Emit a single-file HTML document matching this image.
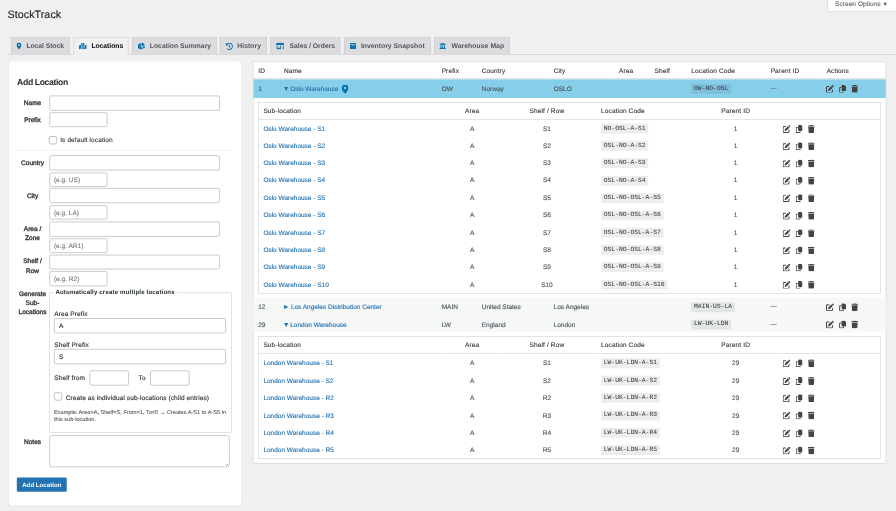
<!DOCTYPE html>
<html lang="en"><head><meta charset="utf-8"><title>StockTrack</title>
<style>
html,body{margin:0;padding:0;background:#f0f0f1;overflow:hidden;width:896px;height:511px}
#s{position:absolute;left:0;top:0;width:1920px;height:1095px;transform:scale(0.4666667);transform-origin:0 0;font-family:"Liberation Sans",sans-serif;font-size:14px;color:#3c434a;text-rendering:geometricPrecision;will-change:opacity;-webkit-text-stroke:.3px}
#s *{box-sizing:border-box}
.so{position:absolute;left:1772.5px;top:-5px;width:160px;height:29.5px;border:1px solid #c3c4c7;border-radius:0 0 4px 4px;background:rgba(255,255,255,.996);color:#646970;font-size:14px;line-height:24px;padding-left:16px;letter-spacing:.08px;white-space:nowrap}
.sotri{font-size:11.5px;margin-left:0;position:relative;top:0;letter-spacing:0}
.h1{position:absolute;left:16px;top:15px;font-size:23px;line-height:30px;color:#1d2327;letter-spacing:.1px;white-space:nowrap;-webkit-text-stroke:.3px}
.tabline{position:absolute;top:115.5px;height:1px;background:#c3c4c7}
.tab{position:absolute;top:79.5px;height:36px;border:1px solid #c3c4c7;border-bottom:none;background:rgba(220,220,222,.996);color:#50575e;font-weight:bold;font-size:14.5px;line-height:24px;padding:5px 0 0 10.5px;white-space:nowrap;-webkit-text-stroke:0}
.tab.act{background:rgba(240,240,241,.996);color:#000;height:37px}
.tab span{position:absolute;top:6px}
.tic{fill:#0a74ad;position:absolute;left:10.5px;top:10.5px}
.card{position:absolute;left:19px;top:132px;width:498px;height:952px;background:rgba(255,255,255,.996);border-radius:8px;box-shadow:0 1px 3px rgba(0,0,0,.05)}
.h2{position:absolute;font-size:18.5px;font-weight:bold;color:#1d2327;line-height:24px;white-space:nowrap;letter-spacing:-.8px;-webkit-text-stroke:0}
.lab{position:absolute;left:29.7px;width:80px;text-align:center;font-size:14px;font-weight:normal;color:#2c3338;white-space:nowrap;letter-spacing:0;-webkit-text-stroke:.7px}
.inp{position:absolute;border:1px solid #8c8f94;border-radius:4px;background:rgba(255,255,255,.996);font-size:14px;line-height:28px;padding-left:9px;white-space:nowrap;letter-spacing:0}
.inp.ta:after{content:"";position:absolute;right:2px;bottom:2px;width:8px;height:8px;background:linear-gradient(135deg,transparent 50%,#888 50%,#888 58%,transparent 58%,transparent 72%,#888 72%,#888 80%,transparent 80%)}
.it{position:absolute;font-size:14px;line-height:28px;white-space:nowrap;letter-spacing:0}
.ph{color:#7a7d82}
.val{color:#2c3338}
.cb{position:absolute;width:17px;height:17px;border:1px solid #777b80;border-radius:4px;background:rgba(255,255,255,.996)}
.t13{position:absolute;margin-top:0;font-size:14px;line-height:19px;white-space:nowrap;color:#3c434a;letter-spacing:.2px}
.t13.dk{color:#2c3338}
.hr{position:absolute;height:1px;background:#dcdcde}
.fs{position:absolute;border:1px solid #c3c4c7}
.legbg{position:absolute;background:rgba(255,255,255,.996)}
.legend{position:absolute;font-size:13px;font-weight:bold;line-height:20px;color:#1d2327;white-space:nowrap;letter-spacing:.37px;-webkit-text-stroke:0}
.ex{position:absolute;font-size:12px;line-height:15.3px;color:#646970;white-space:nowrap;letter-spacing:0}
.btn{position:absolute;background:rgba(34,113,177,.996);border-radius:3px;color:#fff;font-size:13px;font-weight:bold;line-height:31px;text-align:center;white-space:nowrap;letter-spacing:.1px;-webkit-text-stroke:0}
table{border-collapse:separate;border-spacing:0;table-layout:fixed}
.tbg{position:absolute;left:542.4px;top:131.6px;width:1357px;height:861px;background:rgba(255,255,255,.996);border:1px solid #c3c4c7;box-shadow:0 1px 1px rgba(0,0,0,.04)}
.band{position:absolute;left:543.4px;width:1355px}
.main{position:absolute;left:542.4px;top:131.6px;width:1357px;border:1px solid transparent}
th{font-weight:normal;text-align:left;font-size:14px;color:#2c3338;padding:0 10px;height:36.9px;border-bottom:1px solid #c3c4c7;white-space:nowrap;letter-spacing:.25px;line-height:20px;-webkit-text-stroke:.2px}
td{font-size:14px;color:#50575e;padding:0 10px;white-space:nowrap;letter-spacing:-.05px;line-height:20px;vertical-align:middle}
.main>tbody>tr>td{height:37.15px}
.main>tbody>tr.blue>td{height:40px}
.main>tbody>tr.blue>td.tx{padding-top:4.6px}
.main>tbody>tr.alt>td{padding-top:2.4px}
.main>tbody>tr.subrow>td{padding:10px;height:auto}
a{color:#2271b1;text-decoration:none;-webkit-text-stroke:.25px}
.tri.r{width:13.6px}
.tri{font-size:15px;letter-spacing:0;display:inline-block;width:12.2px;margin-left:-2.5px;-webkit-text-stroke:0;line-height:16px;vertical-align:baseline}
.pinic{fill:#0a74ad;vertical-align:middle;margin-left:7.5px;position:relative;top:-1.5px}
code{font-family:"Liberation Mono",monospace;font-size:13.6px;background:rgba(0,0,0,.07);padding:2.5px 5.85px;letter-spacing:0;color:#3c434a;display:inline-block;line-height:16px;-webkit-text-stroke:.12px;position:relative;top:-.5px}
.dash{color:#7c8085;font-size:12.5px;-webkit-text-stroke:.6px;position:relative;top:-1.5px}
.acts{display:inline-block;vertical-align:middle;white-space:nowrap;line-height:0;margin-left:-1px;position:relative;top:0}
.ic{fill:#444;vertical-align:middle;margin-right:11px}
.sub{width:1334px;border:1px solid #c3c4c7}
.sub th{height:36.1px}
.s1 td{height:37.18px}
.s2 td{height:37.35px;padding-top:2.4px}
.c{text-align:center}

</style></head><body>
<svg width="0" height="0" style="position:absolute"><defs>
<symbol id="i-pin" viewBox="0 0 384 512"><path d="M215.7 499.2C267 435 384 279.4 384 192C384 86 298 0 192 0S0 86 0 192c0 87.4 117 243 168.3 307.2c12.3 15.3 35.1 15.3 47.4 0zM192 128a64 64 0 1 1 0 128 64 64 0 1 1 0-128z"/></symbol>
<symbol id="i-trash" viewBox="0 0 448 512"><path d="M135.2 17.7L128 32H32C14.3 32 0 46.3 0 64S14.3 96 32 96H416c17.700 0 32-14.300 32-32s-14.300-32-32-32H320l-7.200-14.300C307.400 6.800 296.300 0 284.200 0H163.800c-12.100 0-23.200 6.800-28.600 17.700zM416 128H32L53.200 467c1.600 25.300 22.600 45 47.900 45H346.900c25.300 0 46.300-19.700 47.900-45L416 128z"/></symbol>
<symbol id="i-copy" viewBox="0 0 448 512"><path d="M208 0H332.1c12.7 0 24.9 5.1 33.900 14.100l67.900 67.900c9 9 14.100 21.200 14.100 33.900V336c0 26.500-21.500 48-48 48H208c-26.500 0-48-21.500-48-48V48c0-26.500 21.500-48 48-48zM48 128h80v64H64V448H256V416h64v48c0 26.500-21.500 48-48 48H48c-26.500 0-48-21.500-48-48V176c0-26.500 21.500-48 48-48z"/></symbol>
<symbol id="i-edit" viewBox="0 0 512 512"><path d="M471.6 21.7c-21.9-21.9-57.3-21.9-79.2 0L362.3 51.7l97.9 97.9 30.100-30.100c21.900-21.900 21.900-57.300 0-79.200L471.600 21.700zm-299.200 220c-6.100 6.100-10.800 13.600-13.500 21.900l-29.600 88.800c-2.900 8.600-.600 18.100 5.800 24.600s15.900 8.700 24.600 5.800l88.800-29.600c8.200-2.700 15.700-7.400 21.900-13.500L437.700 172.300 339.700 74.300 172.400 241.700zM96 64C43 64 0 107 0 160V416c0 53 43 96 96 96H352c53 0 96-43 96-96V320c0-17.700-14.300-32-32-32s-32 14.300-32 32v96c0 17.700-14.300 32-32 32H96c-17.700 0-32-14.300-32-32V160c0-17.700 14.300-32 32-32h96c17.700 0 32-14.300 32-32s-14.300-32-32-32H96z"/></symbol>
<symbol id="i-pie" viewBox="0 0 544 512"><path d="M527.79 288H290.5l158.03 158.03c6.04 6.04 15.98 6.53 22.19.68 38.7-36.46 65.32-85.61 73.13-140.86 1.34-9.46-6.51-17.85-16.06-17.850zm-15.830-64.800C503.720 103.740 408.260 8.280 288.800.040 279.680-.590 272 7.100 272 16.240V240h223.770c9.140 0 16.820-7.680 16.190-16.800zM224 288V50.710c0-9.550-8.390-17.400-17.840-16.060C86.990 51.490-4.100 155.600.140 280.370 4.500 408.510 114.830 513.590 243.030 511.980c50.400-.630 96.970-16.870 135.260-44.030 7.900-5.600 8.420-17.230 1.570-24.080L224 288z"/></symbol>
<symbol id="i-history" viewBox="0 0 512 512"><path d="M504 255.531c.253 136.640-111.180 248.372-247.820 248.468-59.015.042-113.223-20.530-155.822-54.911-11.077-8.940-11.905-25.541-1.839-35.607l11.267-11.267c8.609-8.609 22.353-9.551 31.891-1.984C173.062 425.135 212.781 440 256 440c101.705 0 184-82.311 184-184 0-101.705-82.311-184-184-184-48.814 0-93.149 18.969-126.068 49.932l50.754 50.754c10.080 10.080 2.941 27.314-11.313 27.314H24c-8.837 0-16-7.163-16-16V38.627c0-14.254 17.234-21.393 27.314-11.314l49.372 49.372C129.209 34.136 189.552 8 256 8c136.810 0 247.747 110.780 248 247.531zm-180.912 78.784l9.823-12.630c8.138-10.463 6.253-25.542-4.210-33.679L288 256.349V152c0-13.255-10.745-24-24-24h-16c-13.255 0-24 10.745-24 24v135.651l65.409 50.874c10.463 8.137 25.541 6.253 33.679-4.210z"/></symbol>
<symbol id="i-store" viewBox="0 0 640 512"><path d="M320 384H128V224H64v256c0 17.7 14.3 32 32 32h256c17.7 0 32-14.3 32-32V224h-64v160zm314.600-241.800l-85.300-128c-6-8.900-16-14.200-26.700-14.200H117.400c-10.700 0-20.700 5.300-26.600 14.200l-85.300 128c-14.200 21.300 1 49.800 26.600 49.800H608c25.500 0 40.700-28.500 26.600-49.800zM512 496c0 8.800 7.200 16 16 16h32c8.800 0 16-7.200 16-16V224h-64v272z"/></symbol>
<symbol id="i-archive" viewBox="0 0 512 512"><path d="M32 448c0 17.700 14.300 32 32 32h384c17.700 0 32-14.300 32-32V160H32v288zm160-212c0-6.600 5.400-12 12-12h104c6.600 0 12 5.400 12 12v8c0 6.600-5.400 12-12 12H204c-6.600 0-12-5.400-12-12v-8zM480 32H32C14.300 32 0 46.300 0 64v48c0 8.800 7.200 16 16 16h480c8.800 0 16-7.200 16-16V64c0-17.700-14.300-32-32-32z"/></symbol>
<symbol id="i-univ" viewBox="0 0 512 512"><path d="M496 128v16a8 8 0 0 1-8 8h-24v12c0 6.627-5.373 12-12 12H60c-6.627 0-12-5.373-12-12v-12H24a8 8 0 0 1-8-8v-16a8 8 0 0 1 4.941-7.392l232-88a7.996 7.996 0 0 1 6.118 0l232 88A8 8 0 0 1 496 128zm-24 304H40c-13.255 0-24 10.745-24 24v16a8 8 0 0 0 8 8h464a8 8 0 0 0 8-8v-16c0-13.255-10.745-24-24-24zM96 192v192H60c-6.627 0-12 5.373-12 12v20h416v-20c0-6.627-5.373-12-12-12h-36V192h-64v192h-64V192h-64v192h-64V192H96z"/></symbol>
<symbol id="i-mapm" viewBox="0 0 576 512"><path d="M288 0c-69.590 0-126 56.410-126 126 0 56.260 82.350 158.800 113.900 196.020 6.390 7.540 17.820 7.540 24.200 0C331.650 284.800 414 182.260 414 126 414 56.410 357.590 0 288 0zm0 168c-23.200 0-42-18.800-42-42s18.800-42 42-42 42 18.800 42 42-18.800 42-42 42zM20.120 215.950A32.006 32.006 0 0 0 0 245.660v250.320c0 11.320 11.430 19.060 21.940 14.860L160 448V214.920c-8.840-15.980-16.070-31.540-21.250-46.420L20.120 215.950zM288 359.670c-14.070 0-27.380-6.180-36.510-16.960-19.660-23.200-40.570-49.620-59.490-76.720v182l192 64V266c-18.920 27.090-39.820 53.520-59.490 76.720-9.130 10.770-22.440 16.950-36.510 16.950zm266.060-198.510L416 224v288l139.880-55.950A31.996 31.996 0 0 0 576 426.340V176.020c0-11.320-11.430-19.060-21.940-14.860z"/></symbol>
</defs></svg>
<div id="s">
<div class="so">Screen Options <span class="sotri">▼</span></div>
<div class="h1">StockTrack</div>
<div class="tabline" style="left:16px;width:142px"></div><div class="tabline" style="left:274.5px;width:1646px"></div>
<a class="tab" style="left:23.6px;width:125.5px"><svg class="tic" width="11.25" height="15"><use href="#i-pin"/></svg><span style="left:32.0px;letter-spacing:-0.10px">Local Stock</span></a>
<a class="tab act" style="left:157.7px;width:117.0px"><svg class="tic" width="16.88" height="15"><use href="#i-mapm"/></svg><span style="left:37.2px;letter-spacing:-0.06px">Locations</span></a>
<a class="tab" style="left:283.2px;width:181.3px"><svg class="tic" width="15.94" height="15"><use href="#i-pie"/></svg><span style="left:36.8px;letter-spacing:0.05px">Location Summary</span></a>
<a class="tab" style="left:471.4px;width:100.3px"><svg class="tic" width="16.50" height="16.5"><use href="#i-history"/></svg><span style="left:36.1px;letter-spacing:0.16px">History</span></a>
<a class="tab" style="left:579px;width:149.6px"><svg class="tic" width="18.75" height="15"><use href="#i-store"/></svg><span style="left:40.3px;letter-spacing:0.01px">Sales / Orders</span></a>
<a class="tab" style="left:737px;width:186.0px"><svg class="tic" width="15.00" height="15"><use href="#i-archive"/></svg><span style="left:35.4px;letter-spacing:0.07px">Inventory Snapshot</span></a>
<a class="tab" style="left:929.8px;width:162.3px"><svg class="tic" width="15.00" height="15"><use href="#i-univ"/></svg><span style="left:36.5px;letter-spacing:0.19px">Warehouse Map</span></a>
<div class="card"></div>
<div class="h2" style="left:36.7px;top:165px">Add Location</div>
<div class="lab" style="top:210.2px;line-height:19.3px">Name</div>
<div class="inp " style="left:105.6px;top:205px;width:365.4px;height:32px"></div>
<div class="lab" style="top:247.7px;line-height:19.3px">Prefix</div>
<div class="inp " style="left:105.6px;top:241px;width:124.5px;height:31px"></div>
<div class="cb" style="left:105px;top:291.5px"></div><div class="t13" style="left:129px;top:290.2px">Is default location</div>
<div class="hr" style="left:38.9px;top:322px;width:457px"></div>
<div class="lab" style="top:339.1px;line-height:19.3px">Country</div>
<div class="inp " style="left:105.6px;top:333px;width:365.4px;height:32px"></div>
<div class="inp " style="left:105.6px;top:370px;width:124.5px;height:30px"></div><div class="it ph" style="left:115.6px;top:371.0px">(e.g. US)</div>
<div class="lab" style="top:410.2px;line-height:19.3px">City</div>
<div class="inp " style="left:105.6px;top:403px;width:365.4px;height:32px"></div>
<div class="inp " style="left:105.6px;top:440px;width:124.5px;height:30px"></div><div class="it ph" style="left:115.6px;top:441.0px">(e.g. LA)</div>
<div class="lab" style="top:481.5px;line-height:19.3px">Area /<br>Zone</div>
<div class="inp " style="left:105.6px;top:475px;width:365.4px;height:32px"></div>
<div class="inp " style="left:105.6px;top:511px;width:124.5px;height:31px"></div><div class="it ph" style="left:115.6px;top:512.5px">(e.g. AR1)</div>
<div class="lab" style="top:550.4px;line-height:19.3px">Shelf /<br>Row</div>
<div class="inp " style="left:105.6px;top:546px;width:365.4px;height:31px"></div>
<div class="inp " style="left:105.6px;top:581px;width:124.5px;height:32px"></div><div class="it ph" style="left:115.6px;top:583.0px">(e.g. R2)</div>
<div class="lab" style="top:620.8px;line-height:19.3px">Generate<br>Sub-<br>Locations</div>
<div class="fs" style="left:105px;top:626.6px;width:391px;height:300.4px"></div>
<div class="legbg" style="left:115.8px;top:620px;width:262px;height:14px"></div><div class="legend" style="left:118.8px;top:616px">Automatically create multiple locations</div>
<div class="t13 dk" style="left:116.3px;top:662.5px">Area Prefix</div>
<div class="inp " style="left:116.3px;top:682px;width:367.4px;height:32px"></div><div class="it val" style="left:126.3px;top:684.0px">A</div>
<div class="t13 dk" style="left:116.3px;top:729px">Shelf Prefix</div>
<div class="inp " style="left:116.3px;top:748px;width:367.4px;height:32px"></div><div class="it val" style="left:126.3px;top:750.0px">S</div>
<div class="t13 dk" style="left:116.3px;top:801px">Shelf from</div>
<div class="inp " style="left:192px;top:794px;width:84px;height:32px"></div>
<div class="t13 dk" style="left:297px;top:801px">To</div>
<div class="inp " style="left:322px;top:794px;width:84px;height:32px"></div>
<div class="cb" style="left:116.3px;top:840.5px"></div><div class="t13 dk" style="left:140.8px;top:843.2px">Create as individual sub-locations (child entries)</div>
<div class="ex" style="left:115.7px;top:875.5px">Example: Area=A, Shelf=S, From=1, To=5 → Creates A-S1 to A-S5 in<br>this sub-location.</div>
<div class="lab" style="top:937.5px;line-height:19.3px">Notes</div>
<div class="inp ta" style="left:105.6px;top:933.2px;width:386px;height:68px"></div>
<div class="btn" style="left:36.1px;top:1022.6px;width:107.2px;height:31px">Add Location</div>
<div class="tbg"></div><div class="band" style="top:169.6px;height:40px;background:rgba(135,206,235,.996)"></div><div class="band" style="top:638px;height:74.3px;background:rgba(246,247,247,.996)"></div>
<table class="main"><colgroup><col style="width:55px"><col style="width:338px"><col style="width:86px"><col style="width:154px"><col style="width:140px"><col style="width:76px"><col style="width:79px"><col style="width:170px"><col style="width:120px"><col></colgroup>
<thead><tr><th>ID</th><th>Name</th><th>Prefix</th><th>Country</th><th>City</th><th>Area</th><th>Shelf</th><th>Location Code</th><th>Parent ID</th><th>Actions</th></tr></thead><tbody>
<tr class="blue"><td>1</td><td class="tx"><a><span class="tri">▼</span> Oslo Warehouse</a><svg class="pinic" width="15.00" height="20"><use href="#i-pin"/></svg></td><td>OW</td><td>Norway</td><td>OSLO</td><td></td><td></td><td><code>OW-NO-OSL</code></td><td><span class="dash">—</span></td><td><span class="acts"><svg class="ic" width="17.00" height="17"><use href="#i-edit"/></svg><svg class="ic" width="14.88" height="17"><use href="#i-copy"/></svg><svg class="ic" width="14.88" height="17"><use href="#i-trash"/></svg></span></td></tr>
<tr class="subrow"><td colspan="10" style="padding-top:9.7px;padding-bottom:8.8px"><table class="sub s1"><colgroup><col style="width:403px"><col style="width:108.7px"><col style="width:211.8px"><col style="width:207px"><col style="width:183px"><col></colgroup>
<thead><tr><th>Sub-location</th><th class="c">Area</th><th class="c">Shelf / Row</th><th>Location Code</th><th class="c">Parent ID</th><th></th></tr></thead><tbody>
<tr><td><a>Oslo Warehouse - S1</a></td><td class="c">A</td><td class="c">S1</td><td><code>NO-OSL-A-S1</code></td><td class="c">1</td><td><span class="acts"><svg class="ic" width="17.00" height="17"><use href="#i-edit"/></svg><svg class="ic" width="14.88" height="17"><use href="#i-copy"/></svg><svg class="ic" width="14.88" height="17"><use href="#i-trash"/></svg></span></td></tr>
<tr><td><a>Oslo Warehouse - S2</a></td><td class="c">A</td><td class="c">S2</td><td><code>OSL-NO-A-S2</code></td><td class="c">1</td><td><span class="acts"><svg class="ic" width="17.00" height="17"><use href="#i-edit"/></svg><svg class="ic" width="14.88" height="17"><use href="#i-copy"/></svg><svg class="ic" width="14.88" height="17"><use href="#i-trash"/></svg></span></td></tr>
<tr><td><a>Oslo Warehouse - S3</a></td><td class="c">A</td><td class="c">S3</td><td><code>OSL-NO-A-S3</code></td><td class="c">1</td><td><span class="acts"><svg class="ic" width="17.00" height="17"><use href="#i-edit"/></svg><svg class="ic" width="14.88" height="17"><use href="#i-copy"/></svg><svg class="ic" width="14.88" height="17"><use href="#i-trash"/></svg></span></td></tr>
<tr><td><a>Oslo Warehouse - S4</a></td><td class="c">A</td><td class="c">S4</td><td><code>OSL-NO-A-S4</code></td><td class="c">1</td><td><span class="acts"><svg class="ic" width="17.00" height="17"><use href="#i-edit"/></svg><svg class="ic" width="14.88" height="17"><use href="#i-copy"/></svg><svg class="ic" width="14.88" height="17"><use href="#i-trash"/></svg></span></td></tr>
<tr><td><a>Oslo Warehouse - S5</a></td><td class="c">A</td><td class="c">S5</td><td><code>OSL-NO-OSL-A-S5</code></td><td class="c">1</td><td><span class="acts"><svg class="ic" width="17.00" height="17"><use href="#i-edit"/></svg><svg class="ic" width="14.88" height="17"><use href="#i-copy"/></svg><svg class="ic" width="14.88" height="17"><use href="#i-trash"/></svg></span></td></tr>
<tr><td><a>Oslo Warehouse - S6</a></td><td class="c">A</td><td class="c">S6</td><td><code>OSL-NO-OSL-A-S6</code></td><td class="c">1</td><td><span class="acts"><svg class="ic" width="17.00" height="17"><use href="#i-edit"/></svg><svg class="ic" width="14.88" height="17"><use href="#i-copy"/></svg><svg class="ic" width="14.88" height="17"><use href="#i-trash"/></svg></span></td></tr>
<tr><td><a>Oslo Warehouse - S7</a></td><td class="c">A</td><td class="c">S7</td><td><code>OSL-NO-OSL-A-S7</code></td><td class="c">1</td><td><span class="acts"><svg class="ic" width="17.00" height="17"><use href="#i-edit"/></svg><svg class="ic" width="14.88" height="17"><use href="#i-copy"/></svg><svg class="ic" width="14.88" height="17"><use href="#i-trash"/></svg></span></td></tr>
<tr><td><a>Oslo Warehouse - S8</a></td><td class="c">A</td><td class="c">S8</td><td><code>OSL-NO-OSL-A-S8</code></td><td class="c">1</td><td><span class="acts"><svg class="ic" width="17.00" height="17"><use href="#i-edit"/></svg><svg class="ic" width="14.88" height="17"><use href="#i-copy"/></svg><svg class="ic" width="14.88" height="17"><use href="#i-trash"/></svg></span></td></tr>
<tr><td><a>Oslo Warehouse - S9</a></td><td class="c">A</td><td class="c">S9</td><td><code>OSL-NO-OSL-A-S9</code></td><td class="c">1</td><td><span class="acts"><svg class="ic" width="17.00" height="17"><use href="#i-edit"/></svg><svg class="ic" width="14.88" height="17"><use href="#i-copy"/></svg><svg class="ic" width="14.88" height="17"><use href="#i-trash"/></svg></span></td></tr>
<tr><td><a>Oslo Warehouse - S10</a></td><td class="c">A</td><td class="c">S10</td><td><code>OSL-NO-OSL-A-S10</code></td><td class="c">1</td><td><span class="acts"><svg class="ic" width="17.00" height="17"><use href="#i-edit"/></svg><svg class="ic" width="14.88" height="17"><use href="#i-copy"/></svg><svg class="ic" width="14.88" height="17"><use href="#i-trash"/></svg></span></td></tr>
</tbody></table></td></tr>
<tr class="alt"><td>12</td><td class="tx"><a><span class="tri r">►</span> Los Angeles Distribution Center</a></td><td>MAIN</td><td>United States</td><td>Los Angeles</td><td></td><td></td><td><code>MAIN-US-LA</code></td><td><span class="dash">—</span></td><td><span class="acts"><svg class="ic" width="17.00" height="17"><use href="#i-edit"/></svg><svg class="ic" width="14.88" height="17"><use href="#i-copy"/></svg><svg class="ic" width="14.88" height="17"><use href="#i-trash"/></svg></span></td></tr>
<tr class="alt"><td>29</td><td class="tx"><a><span class="tri">▼</span> London Warehouse</a></td><td>LW</td><td>England</td><td>London</td><td></td><td></td><td><code>LW-UK-LDN</code></td><td><span class="dash">—</span></td><td><span class="acts"><svg class="ic" width="17.00" height="17"><use href="#i-edit"/></svg><svg class="ic" width="14.88" height="17"><use href="#i-copy"/></svg><svg class="ic" width="14.88" height="17"><use href="#i-trash"/></svg></span></td></tr>
<tr class="subrow"><td colspan="10" style="padding-top:8.5px;padding-bottom:8.6px"><table class="sub s2"><colgroup><col style="width:403px"><col style="width:108.7px"><col style="width:211.8px"><col style="width:207px"><col style="width:183px"><col></colgroup>
<thead><tr><th>Sub-location</th><th class="c">Area</th><th class="c">Shelf / Row</th><th>Location Code</th><th class="c">Parent ID</th><th></th></tr></thead><tbody>
<tr><td><a>London Warehouse - S1</a></td><td class="c">A</td><td class="c">S1</td><td><code>LW-UK-LDN-A-S1</code></td><td class="c">29</td><td><span class="acts"><svg class="ic" width="17.00" height="17"><use href="#i-edit"/></svg><svg class="ic" width="14.88" height="17"><use href="#i-copy"/></svg><svg class="ic" width="14.88" height="17"><use href="#i-trash"/></svg></span></td></tr>
<tr><td><a>London Warehouse - S2</a></td><td class="c">A</td><td class="c">S2</td><td><code>LW-UK-LDN-A-S2</code></td><td class="c">29</td><td><span class="acts"><svg class="ic" width="17.00" height="17"><use href="#i-edit"/></svg><svg class="ic" width="14.88" height="17"><use href="#i-copy"/></svg><svg class="ic" width="14.88" height="17"><use href="#i-trash"/></svg></span></td></tr>
<tr><td><a>London Warehouse - R2</a></td><td class="c">A</td><td class="c">R2</td><td><code>LW-UK-LDN-A-R2</code></td><td class="c">29</td><td><span class="acts"><svg class="ic" width="17.00" height="17"><use href="#i-edit"/></svg><svg class="ic" width="14.88" height="17"><use href="#i-copy"/></svg><svg class="ic" width="14.88" height="17"><use href="#i-trash"/></svg></span></td></tr>
<tr><td><a>London Warehouse - R3</a></td><td class="c">A</td><td class="c">R3</td><td><code>LW-UK-LDN-A-R3</code></td><td class="c">29</td><td><span class="acts"><svg class="ic" width="17.00" height="17"><use href="#i-edit"/></svg><svg class="ic" width="14.88" height="17"><use href="#i-copy"/></svg><svg class="ic" width="14.88" height="17"><use href="#i-trash"/></svg></span></td></tr>
<tr><td><a>London Warehouse - R4</a></td><td class="c">A</td><td class="c">R4</td><td><code>LW-UK-LDN-A-R4</code></td><td class="c">29</td><td><span class="acts"><svg class="ic" width="17.00" height="17"><use href="#i-edit"/></svg><svg class="ic" width="14.88" height="17"><use href="#i-copy"/></svg><svg class="ic" width="14.88" height="17"><use href="#i-trash"/></svg></span></td></tr>
<tr><td><a>London Warehouse - R5</a></td><td class="c">A</td><td class="c">R5</td><td><code>LW-UK-LDN-A-R5</code></td><td class="c">29</td><td><span class="acts"><svg class="ic" width="17.00" height="17"><use href="#i-edit"/></svg><svg class="ic" width="14.88" height="17"><use href="#i-copy"/></svg><svg class="ic" width="14.88" height="17"><use href="#i-trash"/></svg></span></td></tr>
</tbody></table></td></tr>
</tbody></table>
</div>
</body></html>
